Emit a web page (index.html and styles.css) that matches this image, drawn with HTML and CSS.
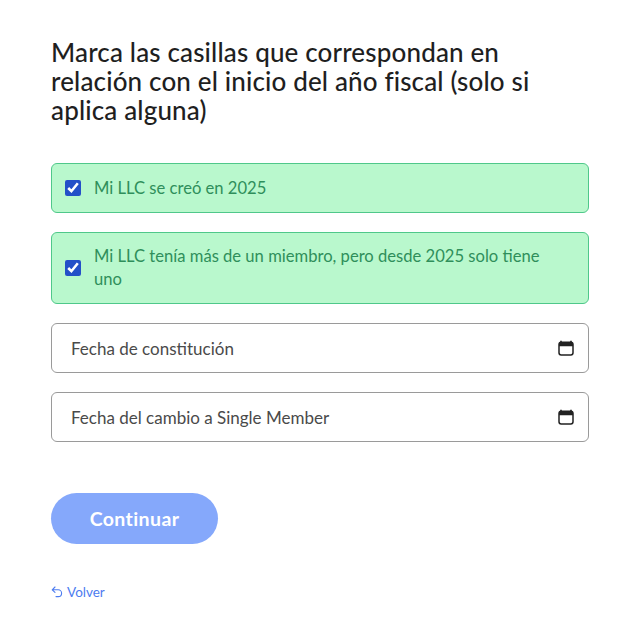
FILE: index.html
```html
<!DOCTYPE html>
<html lang="es">
<head>
    <meta charset="UTF-8">
    <meta name="viewport" content="width=device-width, initial-scale=1.0">
    <title>Inicio del año fiscal</title>
    <link rel="stylesheet" href="styles.css">
</head>
<body>
    <div class="container">
        <h1 class="title">Marca las casillas que correspondan en relación con el inicio del año fiscal (solo si aplica alguna)</h1>

        <div class="fields">
            <label class="check-item">
                <input type="checkbox" checked>
                <span>Mi LLC se creó en 2025</span>
            </label>
            <label class="check-item">
                <input type="checkbox" checked>
                <span>Mi LLC tenía más de un miembro, pero desde 2025 solo tiene uno</span>
            </label>
            <div class="date-field">
                <span>Fecha de constitución</span>
                <svg class="date-icon" viewBox="0 0 16 16" width="16" height="16">
                    <path d="M3 .8v2M13 .8v2" stroke="#222" stroke-width="1.6" fill="none"/>
                    <rect x="1" y="2.2" width="14" height="12.8" rx="2.2" fill="none" stroke="#222" stroke-width="1.5"/>
                    <path d="M1 3.8a1.6 1.6 0 0 1 1.6-1.6h10.8a1.6 1.6 0 0 1 1.6 1.6v2.4H1z" fill="#222"/>
                </svg>
            </div>
            <div class="date-field">
                <span>Fecha del cambio a Single Member</span>
                <svg class="date-icon" viewBox="0 0 16 16" width="16" height="16">
                    <path d="M3 .8v2M13 .8v2" stroke="#222" stroke-width="1.6" fill="none"/>
                    <rect x="1" y="2.2" width="14" height="12.8" rx="2.2" fill="none" stroke="#222" stroke-width="1.5"/>
                    <path d="M1 3.8a1.6 1.6 0 0 1 1.6-1.6h10.8a1.6 1.6 0 0 1 1.6 1.6v2.4H1z" fill="#222"/>
                </svg>
            </div>
        </div>

        <button class="continue-button" disabled>Continuar</button>

        <a class="back-link" href="#">
            <svg viewBox="0 0 12 12" width="12" height="12">
                <path d="M4 1 1.2 3.8 4 6.4M1.4 3.8h5.8a3.4 3.4 0 0 1 0 6.8H5" fill="none" stroke="#4d7cf0" stroke-width="1.1" stroke-linecap="round" stroke-linejoin="round"/>
            </svg>
            <span>Volver</span>
        </a>
    </div>
</body>
</html>
```

FILE: styles.css
```css
body {
    margin: 0;
    background: #fff;
    font-family: "Lato", "Noto Sans", sans-serif;
    color: #4a4a4a;
}
.container {
    padding: 38px 51px 0;
}
.title {
    max-width: 500px;
    margin: 0 0 38px;
    font-size: 26px;
    line-height: 29px;
    font-weight: 500;
    color: #1f1f1f;
    letter-spacing: 0.15px;
}
.fields {
    display: flex;
    flex-direction: column;
    gap: 19px;
}
.check-item {
    display: flex;
    align-items: center;
    gap: 13px;
    min-height: 50px;
    box-sizing: border-box;
    padding: 12px 30px 12px 13px;
    background: #b9f8cd;
    border: 1px solid #4fc88a;
    border-radius: 6px;
    font-size: 16.6px;
    line-height: 23px;
    color: #2f8f5b;
}
.check-item input {
    flex: none;
    width: 16px;
    height: 16px;
    margin: 0;
    accent-color: #2450c8;
}
.date-field {
    display: flex;
    align-items: center;
    justify-content: space-between;
    height: 50px;
    box-sizing: border-box;
    padding: 0 14px 0 19px;
    border: 1px solid #9a9a9a;
    border-radius: 6px;
    font-size: 17px;
}
.continue-button {
    display: block;
    width: 167px;
    height: 51px;
    margin-top: 51px;
    padding: 0;
    border: none;
    border-radius: 26px;
    background: #85a8fb;
    color: #fff;
    font-family: inherit;
    font-size: 19.5px;
    font-weight: 700;
    letter-spacing: 0.4px;
}
.back-link {
    display: flex;
    align-items: center;
    gap: 4px;
    margin-top: 40px;
    font-size: 13.5px;
    color: #4d7cf0;
    text-decoration: none;
}
```
